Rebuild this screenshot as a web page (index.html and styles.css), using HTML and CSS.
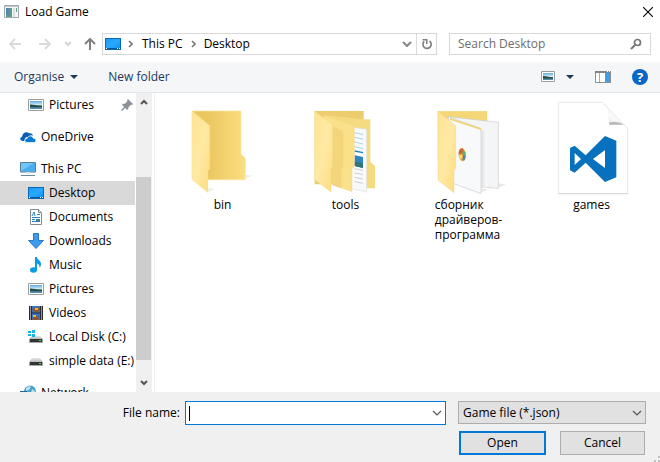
FILE: index.html
```html
<!DOCTYPE html>
<html lang="en">
<head>
<meta charset="utf-8">
<title>Load Game</title>
<link rel="stylesheet" href="styles.css">
</head>
<body>
<svg class="defs" aria-hidden="true">
  <defs>
    <linearGradient id="blue" x1="0" y1="0" x2="1" y2="1"><stop offset="0" stop-color="#1a9bfa"/><stop offset=".5" stop-color="#2ba9ff"/><stop offset="1" stop-color="#0f94f5"/></linearGradient>
    <linearGradient id="sky" x1="0" y1="0" x2="0" y2="1"><stop offset="0" stop-color="#5da7e4"/><stop offset=".5" stop-color="#d9edf6"/><stop offset=".6" stop-color="#356b62"/><stop offset="1" stop-color="#5b93bb"/></linearGradient>
    <linearGradient id="back" x1="0" x2="1"><stop offset=".3" stop-color="#ebc760"/><stop offset="1" stop-color="#fbdf82"/></linearGradient>
    <linearGradient id="front" x1="0" x2="1" y1="0" y2="1"><stop offset="0" stop-color="#fee391"/><stop offset=".5" stop-color="#ffe9a4"/><stop offset="1" stop-color="#fcdc7e"/></linearGradient>
    <linearGradient id="shade" x1="0" x2="1"><stop offset="0" stop-color="#d5d5d5"/><stop offset="1" stop-color="#fff"/></linearGradient>
    <linearGradient id="curl" x1="0" y1="1" x2="1" y2="0"><stop offset="0" stop-color="#d0d0d0"/><stop offset=".4" stop-color="#fafafa"/><stop offset="1" stop-color="#ddd"/></linearGradient>
    <linearGradient id="drivetop" x1="0" x2="0" y1="0" y2="1"><stop offset="0" stop-color="#e4e5e6"/><stop offset="1" stop-color="#b5b8ba"/></linearGradient>
    <symbol id="desktop" viewBox="0 0 16 16"><path d="M0 2h16v12H0z" fill="#0a68ad"/><path d="M1 3h14v9H1z" fill="url(#blue)"/><path d="M1 12h14v1H1z" fill="#07579a"/><path d="M1 12h1v1H1zm11 0h1v1h-1zm2 0h1v1h-1z" fill="#fff"/></symbol>
    <symbol id="picture" viewBox="0 0 16 16"><path d="M.5 2.5h15v11H.5z" fill="#fff" stroke="#9a9ea2"/><path d="M2 4h12v8H2z" fill="url(#sky)"/><path d="M2 7.500c3 0 5 1 12 1.500v1H2z" fill="#294d46"/></symbol>
    <symbol id="drive" viewBox="0 0 16 16"><path d="M4 5h8l3 4H1z" fill="url(#drivetop)"/><path d="M1 9h14v4H1z" fill="#a8abad"/><path d="M2 9h12v3H2z" fill="#333"/><path d="M11 10h2v1h-2z" fill="#4ae24a"/></symbol>
    <symbol id="chevron" viewBox="0 0 10 10"><path d="M1 3l4 4 4-4" fill="none" stroke="currentColor" stroke-width="1.2"/></symbol>
    <symbol id="triangle" viewBox="0 0 8 4"><path d="M0 0h8L4 4z" fill="#1e395b"/></symbol>
  </defs>
</svg>

<main class="dialog">
  <header class="titlebar">
    <svg class="icon" viewBox="0 0 16 16"><path d="M.5 1.500h14v12H.5z" fill="#f4f6f6" stroke="#a2a8b2"/><path d="M1 2h13v1H1z" fill="#c0c7d0"/><path d="M2 4h6v9H2z" fill="#5d9c88"/><path d="M2 4h3v7H2z" fill="#5585a8"/><path d="M9 4h2v9H9z" fill="#dce2e3"/><path d="M12 4h1v4h-1z" fill="#68a286"/></svg>
    <h1>Load Game</h1>
    <button class="plain close" aria-label="Close"><svg viewBox="0 0 10 10" width="10" height="10"><path d="M0 0l10 10M10 0L0 10" stroke="#000" stroke-width="1.1"/></svg></button>
  </header>

  <nav class="navigation" aria-label="Location">
    <div class="history">
      <button class="plain" aria-label="Back"><svg viewBox="0 0 12 12" width="12" height="12"><path d="M12 6H1M6 1L1 6l5 5" fill="none" stroke="#dadada" stroke-width="1.8"/></svg></button>
      <button class="plain" aria-label="Forward"><svg viewBox="0 0 12 12" width="12" height="12"><path d="M0 6h11M6 1l5 5-5 5" fill="none" stroke="#dadada" stroke-width="1.8"/></svg></button>
      <button class="plain recent" aria-label="Recent locations"><svg viewBox="0 0 6 6" width="6" height="6"><path d="M0 1l3 3 3-3" fill="none" stroke="#d2d2d2" stroke-width="1.8"/></svg></button>
      <button class="plain" aria-label="Up"><svg viewBox="0 0 12 12" width="12" height="12"><path d="M6 12V1M1 6l5-5 5 5" fill="none" stroke="#808080" stroke-width="2"/></svg></button>
    </div>
    <div class="address">
      <svg class="icon"><use href="#desktop"/></svg>
      <svg class="crumb" viewBox="0 0 5 8"><path d="M1 1l3 3-3 3" fill="none" stroke="#777" stroke-width="1.6"/></svg>
      <a href="#">This PC</a>
      <svg class="crumb" viewBox="0 0 5 8"><path d="M1 1l3 3-3 3" fill="none" stroke="#777" stroke-width="1.6"/></svg>
      <a href="#">Desktop</a>
      <button class="plain expand" aria-label="Previous locations"><svg viewBox="0 0 10 6" width="10" height="6"><path d="M1 1l4 4 4-4" fill="none" stroke="#858585" stroke-width="2"/></svg></button>
      <button class="plain refresh" aria-label="Refresh"><svg viewBox="0 0 12 12" width="12" height="12"><path d="M8.500 3A4.100 4.100 0 1 1 3.200 3.400" fill="none" stroke="#808080" stroke-width="1.700"/><path d="M1.500 1h5v5H5V2.500H1.500z" fill="#808080"/></svg></button>
    </div>
    <div class="search">
      <input type="search" aria-label="Search Desktop" placeholder="Search Desktop">
      <svg viewBox="0 0 12 12" width="12" height="12"><circle cx="7.500" cy="4.500" r="3" fill="none" stroke="#777" stroke-width="1.700"/><path d="M5.300 6.700L1 11" stroke="#777" stroke-width="2"/></svg>
    </div>
  </nav>

  <div class="toolbar">
    <button class="plain">Organise <svg class="triangle"><use href="#triangle"/></svg></button>
    <button class="plain">New folder</button>
    <div class="views">
      <button class="plain" aria-label="Change view"><svg class="view-icon" viewBox="0 0 14 12"><path d="M.5.5h13v10H.5z" fill="#fff" stroke="#9a9ea2"/><path d="M2 2h10v7H2z" fill="url(#sky)"/><path d="M2 5c3 0 5 1 10 1.500v1H2z" fill="#294d46"/></svg><svg class="triangle"><use href="#triangle"/></svg></button>
      <button class="plain" aria-label="Preview pane"><svg viewBox="0 0 16 12" width="16" height="12"><path d="M.5.5h15v11H.5z" fill="#fff" stroke="#8d8f91"/><path d="M0 0h16v2H0z" fill="#7f8589"/><path d="M4.500 2v9" stroke="#aaa"/><path d="M10 2h5v9h-5z" fill="#3c9de8"/><path d="M12 0h1v1h-1zm2 0h1v1h-1z" fill="#fff"/></svg></button>
      <button class="plain help" aria-label="Help"><span>?</span></button>
    </div>
  </div>

  <div class="body">
    <aside class="sidebar">
      <ul class="tree">
        <li class="child"><svg class="icon"><use href="#picture"/></svg>Pictures
          <svg class="pin" viewBox="0 0 12 12"><path d="M7 0l5 5-1 1-1-.3L7.500 8.200 7.300 10l-1.100 1L1 5.800 2 4.700h2L6.500 2 6 1z" fill="#8b9299"/><path d="M4.500 7.500L.5 11.500" stroke="#8b9299" stroke-width="1.500"/></svg></li>
        <li class="root"><svg class="icon" viewBox="0 0 16 16"><path d="M3 12C0 12-1 8.500 2.200 7.700 2 4 6.500 2 9 4.300c2.200-.5 3.700.6 4 2.300-2-.5-3.700.2-4.500 1.600C6 7.500 4.500 9 4.600 12z" fill="#0a5fb5"/><path d="M7 13.500c-3 0-3-4.300.3-4.300.8-3 5-3 6 0 3.500.2 3.400 4.300.2 4.300z" fill="#0878d4" stroke="#fff" stroke-width=".7"/></svg>OneDrive</li>
        <li class="root"><svg class="icon" viewBox="0 0 16 16"><path d="M.5 1.500h15v9.500H.5z" fill="#72c5f8" stroke="#567f9c"/><path d="M1 10L14 2h1v8z" fill="#49aeed"/><path d="M6 11h4v2H6z" fill="#dbe4ea"/><path d="M1 14.500h14" stroke="#68879a"/></svg>This PC</li>
        <li class="child selected"><svg class="icon"><use href="#desktop"/></svg>Desktop</li>
        <li class="child"><svg class="icon" viewBox="0 0 16 16"><path d="M2.500.5h8l3 3v12h-11z" fill="#fff" stroke="#838a8f"/><path d="M10.500.5v3h3" fill="#ddd" stroke="#838a8f"/><path d="M4 7l2-4 1 4M9 5.500h3M4 8.500h8M4 10.500h3M4 12.500h8" stroke="#2584c8" fill="none"/><path d="M8 10h4v2H8z" fill="#43818a"/></svg>Documents</li>
        <li class="child"><svg class="icon" viewBox="0 0 16 16"><path d="M5.500.5h5v7h5L8 15.500.5 7.500h5z" fill="#3c9af0" stroke="#2b78c4"/></svg>Downloads</li>
        <li class="child"><svg class="icon" viewBox="0 0 16 16"><ellipse cx="5.500" cy="13" rx="3.500" ry="2.700" fill="#0c9bea"/><path d="M7 0h2c0 3 4 3.500 4 7 0 2-1 3-1.500 4 .3-3-1-4-2.500-4.500V13H7z" fill="#0c9bea"/></svg>Music</li>
        <li class="child"><svg class="icon"><use href="#picture"/></svg>Pictures</li>
        <li class="child"><svg class="icon" viewBox="0 0 16 16"><path d="M1 1h14v14H1z" fill="#2a2a2a"/><path d="M4 1h8v6.500H4zm0 7.500h8V15H4z" fill="#3375c8"/><path d="M4 5l3-3 1 2 3-2 1 4-4 1.500zm2 6h4l1 4H4z" fill="#8d5331"/><path d="M7 3h3v2H7zm-2 7h3v2H5z" fill="#eabb25"/><path d="M2.500 1.500v13M13.500 1.500v13" stroke="#fff" stroke-dasharray="1 1"/></svg>Videos</li>
        <li class="child"><svg class="icon" viewBox="0 0 16 16"><path d="M4 7h8l3 3H1z" fill="url(#drivetop)"/><path d="M1 10h14v4H1z" fill="#a8abad"/><path d="M2 10h12v3H2z" fill="#333"/><path d="M11 11h2v1h-2z" fill="#4ae24a"/><path d="M0 2h3v2H0zm4-1h3v3H4zM0 5h3v2H0zm4 0h3v3H4z" fill="#12b5ee"/></svg>Local Disk (C:)</li>
        <li class="child"><svg class="icon"><use href="#drive"/></svg>simple data (E:)</li>
        <li class="root"><svg class="icon" viewBox="0 0 16 16"><circle cx="10" cy="6.500" r="6" fill="#4a9fc7"/><path d="M6 3c2-2 4-2 5-1L9 5 6 6zm6 1l3 2-1 4-3-2z" fill="#b8e0ea"/><path d="M0 6h7v6H0z" fill="#20669e"/></svg>Network</li>
      </ul>
      <div class="scrollbar" aria-hidden="true">
        <svg viewBox="0 0 8 6"><path d="M1 5l3-3 3 3" fill="none" stroke="#555" stroke-width="2"/></svg>
        <div class="track"><div class="thumb"></div></div>
        <svg viewBox="0 0 8 6"><path d="M1 1l3 3 3-3" fill="none" stroke="#555" stroke-width="2"/></svg>
      </div>
    </aside>

    <section class="files" aria-label="Files">
      <figure>
        <svg viewBox="13 15 288 288"><path d="M224 250l20-8-18-2zM112 291l20-8-18-4z" fill="#ececec"/><path d="M64 48h147v130l13 12v64H64z" fill="url(#back)" stroke="#ffe494" stroke-width="2"/><path d="M64 48l53 44v130l-5 5v66l-48-39z" fill="url(#front)" stroke="#ffe8a0"/></svg>
        <figcaption>bin</figcaption>
      </figure>
      <figure>
        <svg viewBox="-7 15 288 288"><path d="M43 48h147v220H43z" fill="#edcc6d"/><path d="M70 60l118 13h22v128l14 12v67h-25z" fill="#f6da80"/><path d="M100 88l99 15v187l-99-18z" fill="#f8f9fa" stroke="#d9dcde" stroke-width="2"/><path d="M163 113l25 6M163 127l25 6M163 141l25 6M163 155l25 6" stroke="#80c1e6" stroke-width="2"/><path d="M163 168l25 5" stroke="#1887cf" stroke-width="4"/><path d="M163 181l25 5v33l-25-6z" fill="#3183bd"/><path d="M163 200l25 5v14l-25-6z" fill="#347478"/><path d="M163 221l25 5M163 234l25 5M163 247l25 5M163 260l25 5" stroke="#b7bcc0" stroke-width="2"/><path d="M70 60l92 33v119l-7 10v68l-85-31z" fill="#fbe08a" stroke="#f0cf74"/><path d="M80 84l49 25v106l-6 8v58l-43-20z" fill="#e8c86b" opacity=".45"/><path d="M94 290l20-12-21-5z" fill="#fff"/><path d="M43 48l54 42v126l-5 7v68l-49-37z" fill="url(#front)" stroke="#ecd37b"/></svg>
        <figcaption>tools</figcaption>
      </figure>
      <figure>
        <svg viewBox="1 15 288 288"><path d="M233 277l24-8-24-4zM182 292l20-8-20-4z" fill="#e8e8e8"/><path d="M52 49h147v150H52z" fill="#f5d777" stroke="#e7ca73"/><path d="M83 65l150 17v198l-49-4z" fill="#f4f5f6" stroke="#c9cbcd" stroke-width="2"/><path d="M83 65l98 36v195l-98-36z" fill="#f8f9fa" stroke="#c9cccf" stroke-width="2"/><path d="M88 69l93 31v5L88 74z" fill="#f3d36d"/><path d="M182 106l17 4v165l-17 5z" fill="url(#shade)" opacity=".7"/><ellipse cx="125" cy="179" rx="11" ry="20" transform="rotate(-8 125 179)" fill="#ed9936"/><path d="M114 172c2-10 10-14 14-9l-2 11-12 4z" fill="#cf6136"/><path d="M127 164l6 8 1 12-9-8z" fill="#4ab56b"/><path d="M115 181l8-2 3 11-7 1z" fill="#ffe46a"/><path d="M128 180l6 3-3 13-6-3z" fill="#3f87b8"/><path d="M52 49l53 43v128l-5 7v66l-48-38z" fill="url(#front)" stroke="#e7ca73"/></svg>
        <figcaption>сборник драйверов-программа</figcaption>
      </figure>
      <figure>
        <svg viewBox="10 15 288 288"><path d="M53 22h132l76 78v196H53z" fill="#fff" stroke="#e5e5e5" stroke-width="3"/><path d="M53 296h209" stroke="#ccc" stroke-width="2"/><path d="M185 22c14 5 21 35 19 61 22-4 46 2 57 17z" fill="url(#curl)"/><path d="M204 83c17-5 32-2 45 6l-42 1z" fill="#bcbcbc"/><path fill-rule="evenodd" d="M193 123l34 14v110l-34 14-58-58-33 30-14-7v-67l14-7 33 29zm0 42l-36 27 36 27zm-91 9v36l19-18z" fill="#0871be"/></svg>
        <figcaption>games</figcaption>
      </figure>
    </section>
  </div>

  <form class="footer">
    <label for="filename">File name:</label>
    <div class="combo"><input id="filename" type="text"><span class="caret"></span><svg class="arrow"><use href="#chevron"/></svg></div>
    <div class="choices">
      <div class="select"><select aria-label="File type"><option>Game file (*.json)</option></select><svg class="arrow"><use href="#chevron"/></svg></div>
      <div class="actions">
        <button type="button" class="primary">Open</button>
        <button type="button">Cancel</button>
      </div>
    </div>
    <svg class="grip" viewBox="0 0 6 6"><path d="M4 0h2v2H4zM0 4h2v2H0zM4 4h2v2H4z" fill="#bfbfbf"/></svg>
  </form>
</main>
</body>
</html>
```
FILE: styles.css
```css
* { box-sizing: border-box; }
body { margin: 0; background: #fff; color: #000; font: 12px/16px "Open Sans", "Noto Sans", sans-serif; }
button, input, select { font: inherit; color: inherit; margin: 0; }
svg { display: block; flex: none; }
.defs { position: absolute; width: 0; height: 0; }
.dialog { display: flex; flex-direction: column; height: 100vh; overflow: hidden; }
.icon { width: 16px; height: 16px; }
.plain { display: flex; align-items: center; padding: 0; border: 0; background: none; }

.titlebar { display: flex; align-items: center; gap: 5px; height: 24px; padding: 0 7px 0 4px; }
.titlebar h1 { margin: 0; font-size: 12px; font-weight: 400; }
.close { margin-left: auto; }

.navigation { display: flex; align-items: center; height: 38px; padding: 2px 9px 0 9px; }
.history { display: flex; align-items: center; width: 93px; gap: 18px; }
.history .recent { margin: 0 -5px 0 -4px; }
.address { display: flex; align-items: center; flex: 1; height: 22px; padding-left: 2px; border: 1px solid #d9d9d9; }
.address a { color: #000; text-decoration: none; }
.crumb { width: 5px; height: 8px; margin: 0 9px 0 7px; }
.address a + .crumb { margin: 0 8px; }
.expand { margin-left: auto; padding-right: 4px; }
.refresh { justify-content: center; width: 20px; height: 20px; border-left: 1px solid #d9d9d9; }
.search { display: flex; align-items: center; width: 202px; height: 22px; margin-left: 12px; padding: 0 8px; border: 1px solid #d9d9d9; }
.search input { flex: 1; min-width: 0; padding: 0; border: 0; outline: 0; background: none; }
.search input::placeholder { color: #6d6d6d; opacity: 1; }

.toolbar { display: flex; align-items: center; gap: 30px; height: 31px; padding: 0 12px 0 14px; border-bottom: 1px solid #e5e6e7; background: #f4f6f8; color: #1e395b; }
.triangle { width: 8px; height: 4px; margin-left: 6px; }
.views { display: flex; align-items: center; gap: 21px; margin-left: auto; }
.views .triangle { margin-left: 11px; }
.view-icon { width: 14px; height: 12px; }
.help { justify-content: center; width: 16px; height: 16px; border-radius: 8px; background: #0867c6; color: #fff; font-size: 13px; font-weight: 700; }

.body { display: flex; flex: 1; min-height: 0; }
.sidebar { display: flex; width: 155px; padding-right: 2px; border-right: 1px solid #f0f0f0; }
.tree { flex: 1; min-width: 0; margin: 0; padding: 0 1px 0 0; overflow: hidden; list-style: none; }
.tree li { display: flex; align-items: center; gap: 5px; height: 24px; white-space: nowrap; }
.tree .child { padding-left: 28px; }
.tree .root { margin-top: 8px; padding-left: 20px; }
.tree .selected { background: #d9d9d9; }
.pin { width: 12px; height: 12px; margin: 0 2px 0 auto; }
.scrollbar { display: flex; flex-direction: column; align-items: center; width: 16px; padding: 6px 0; background: #f0f0f0; }
.scrollbar svg { width: 8px; height: 6px; }
.track { display: flex; flex: 1; align-self: stretch; padding: 72px 1px 20px 0; }
.thumb { flex: 1; background: #cdcdcd; }

.files { display: grid; grid-template-columns: repeat(auto-fill, 123px); align-content: start; flex: 1; padding: 7px 0 0 6px; }
.files figure { display: flex; flex-direction: column; align-items: center; margin: 0; }
.files figure svg { width: 96px; height: 96px; }
.files figcaption { width: min-content; line-height: 15px; margin-top: 1px; }

.footer { display: flex; align-items: flex-start; position: relative; height: 70px; padding: 9px 14px 0 0; background: #f0f0f0; }
.footer label { width: 185px; padding-right: 5px; line-height: 24px; text-align: right; }
.combo, .select { display: flex; position: relative; }
.combo { flex: 1; }
.combo input { width: 100%; height: 24px; padding: 0 24px 0 4px; border: 1px solid #0078d7; outline: 0; background: #fff; }
.caret { position: absolute; left: 4px; top: 5px; width: 1px; height: 15px; background: #000; }
.arrow { position: absolute; right: 4px; top: 7px; width: 10px; height: 10px; color: #555; pointer-events: none; }
.choices { width: 188px; margin-left: 12px; }
.select select { width: 100%; height: 23px; padding: 0 20px 0 4px; border: 1px solid #adadad; border-radius: 0; background: #e1e1e1; appearance: none; }
.actions { display: flex; gap: 14px; margin-top: 7px; padding: 0 1px; }
.actions button { flex: 1; height: 24px; padding: 0; border: 1px solid #adadad; background: #e1e1e1; }
.actions .primary { border: 2px solid #0078d7; }
.grip { position: absolute; right: 0; bottom: 0; width: 6px; height: 6px; }
```
